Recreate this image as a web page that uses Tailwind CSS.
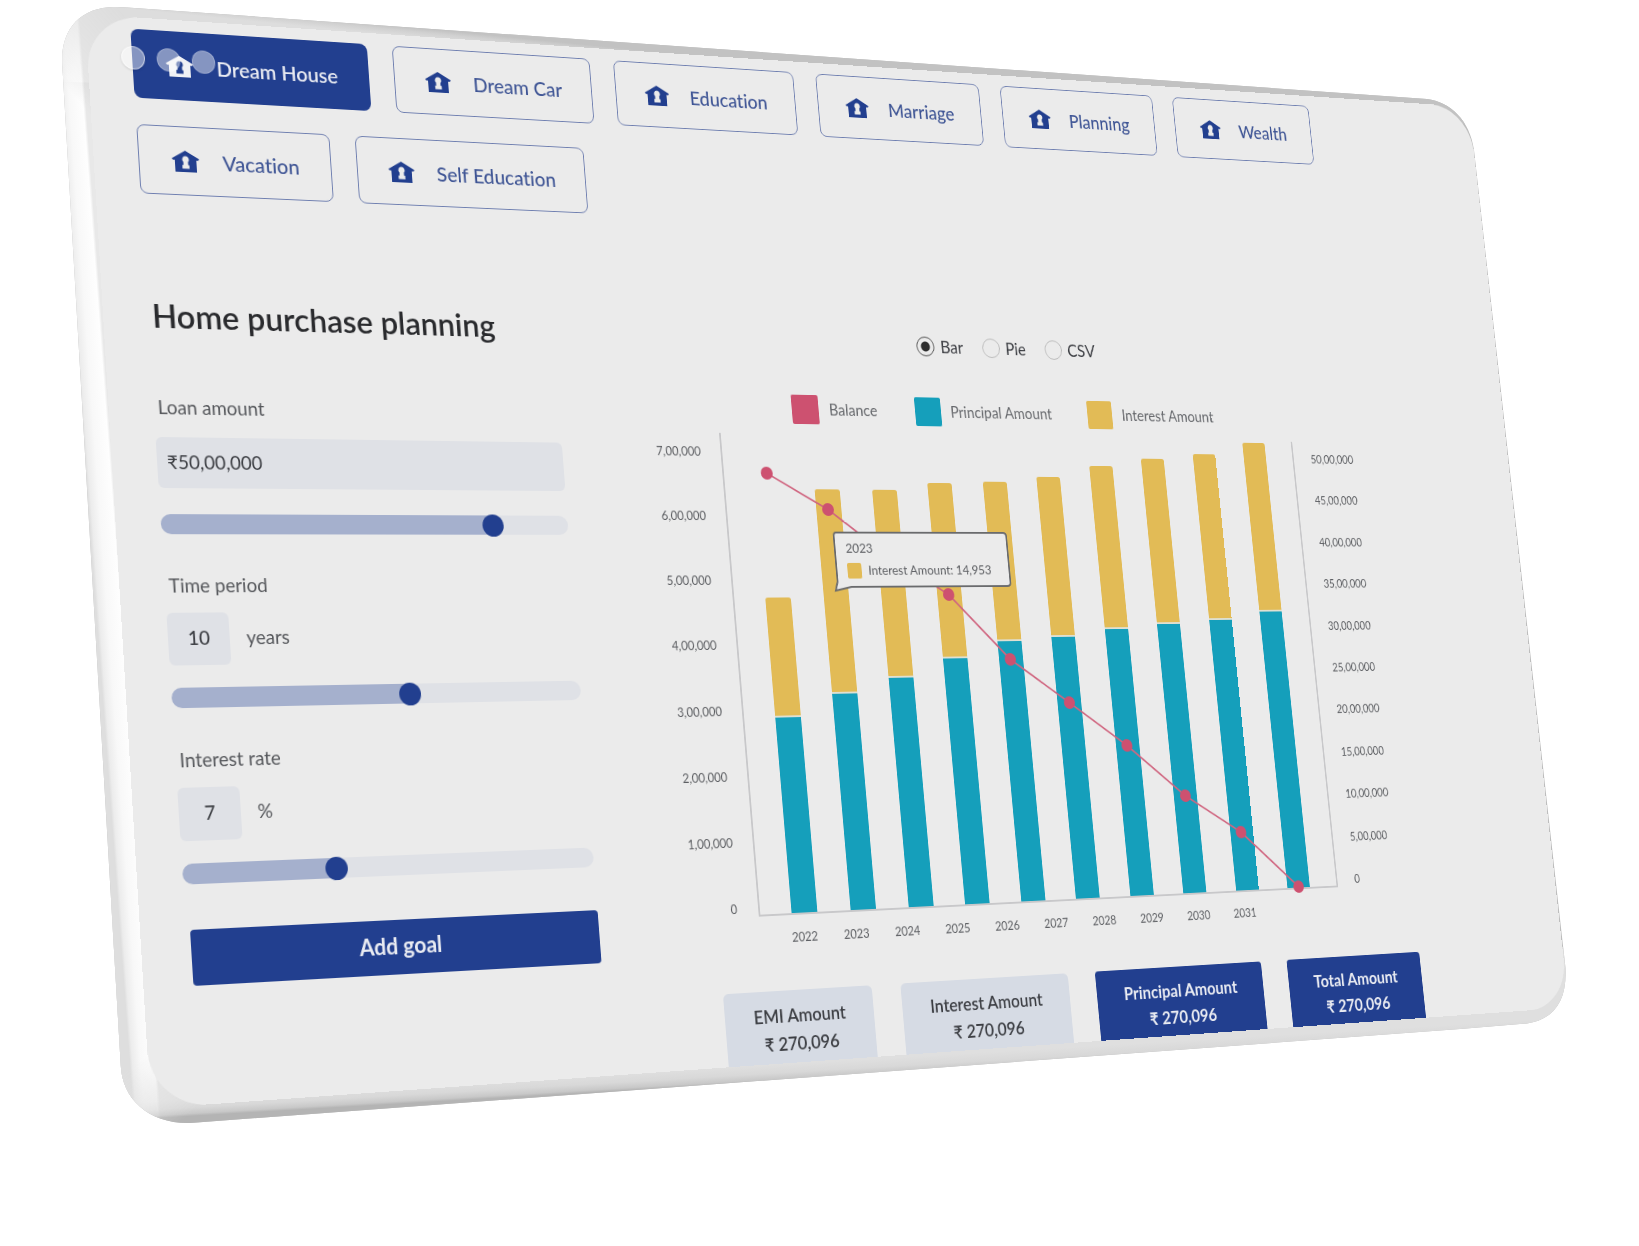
<!DOCTYPE html>
<html lang="en">
<head>
<meta charset="utf-8">
<meta name="viewport" content="width=device-width, initial-scale=1">
<title>Home purchase planning</title>
<script src="https://cdn.jsdelivr.net/npm/@tailwindcss/browser@4"></script>
</head>
<body class="bg-white font-['Lato','Liberation_Sans',sans-serif] [font-variant-ligatures:none]">
<svg width="0" height="0" class="absolute" aria-hidden="true">
  <symbol id="house" viewBox="0 0 28 22">
    <path fill="currentColor" fill-rule="evenodd" d="M14 0 28 8.2 27 9.8H25V22H3V9.8H1L0 8.2ZM14 5.6a3.5 3.5 0 0 0-2.4 6V14.800H10.400V18.600H17.600V14.800H16.400V11.600A3.500 3.500 0 0 0 14 5.600Z"/>
  </symbol>
</svg>
<div class="relative min-h-screen overflow-hidden">

  <!-- body of the tablet: rounded slab with shaded edges -->
  <svg class="absolute top-0 left-0 h-[1246px] w-[1639px]" viewBox="0 0 1639 1246" aria-hidden="true">
    <defs>
      <linearGradient id="edgeTop" gradientUnits="userSpaceOnUse" x1="400" y1="26" x2="399" y2="36">
        <stop offset="0" stop-color="#c2c2c2"/><stop offset=".4" stop-color="#d0d0d0"/><stop offset="1" stop-color="#dddddd"/>
      </linearGradient>
      <linearGradient id="edgeBottom" gradientUnits="userSpaceOnUse" x1="701" y1="1069" x2="702" y2="1086">
        <stop offset="0" stop-color="#dfdfdf"/><stop offset=".5" stop-color="#d8d8d8"/><stop offset=".85" stop-color="#c8c8c8"/><stop offset="1" stop-color="#b4b4b4"/>
      </linearGradient>
      <linearGradient id="edgeLeft" gradientUnits="userSpaceOnUse" x1="88" y1="500" x2="115" y2="498">
        <stop offset="0" stop-color="#dedede"/><stop offset=".1" stop-color="#ececec"/><stop offset=".4" stop-color="#f8f8f8"/><stop offset=".9" stop-color="#fefefe"/><stop offset="1" stop-color="#e8e8e8"/>
      </linearGradient>
      <linearGradient id="fade" gradientUnits="userSpaceOnUse" x1="60" y1="80" x2="130" y2="20">
        <stop offset="0" stop-color="#fff"/><stop offset="1" stop-color="#000"/>
      </linearGradient>
      <linearGradient id="fadeLow" gradientUnits="userSpaceOnUse" x1="140" y1="1060" x2="186" y2="1118">
        <stop offset="0" stop-color="#fff"/><stop offset="1" stop-color="#000"/>
      </linearGradient>
      <mask id="fadeMask" maskUnits="userSpaceOnUse" x="0" y="0" width="260" height="1246"><rect width="260" height="600" fill="url(#fade)"/><rect y="600" width="260" height="646" fill="url(#fadeLow)"/></mask>
      <clipPath id="slab"><path d="M62.3 65C60 30 80 6 117 7L127 7.5 1427 99C1450 102 1470 120 1474 150L1565.5 968C1567 1000 1555 1019 1527 1023.5L1460 1029 190 1123C150 1124 122 1100 120.7 1065Z"/></clipPath>
    </defs>
    <g clip-path="url(#slab)">
      <rect width="1639" height="1246" fill="#bdbdbd"/>
      <path d="M0 0H1500V125L0 80Z" fill="url(#edgeTop)"/>
      <path d="M0 900H1500L1580 960V1246H0Z" fill="url(#edgeBottom)"/>
      <path d="M0 0H160L200 1246H0Z" fill="url(#edgeLeft)" mask="url(#fadeMask)"/>
    </g>
  </svg>

  <!-- screen, seen in perspective -->
  <div class="relative flex w-[calc(100%+41px)] origin-top-left flex-col overflow-hidden rounded-[56px] bg-[#ebebeb] [transform:matrix3d(1.007976,0.06869,0,0.000125464,0.05537,0.973148,0,-0.0000363148,0,0,1,0,85,14,0,1)]">

    <nav class="flex flex-wrap gap-[27px] pt-3 pr-11 pl-[45px] text-[21px] leading-7 font-medium text-[#3f5595]" aria-label="Goals">
      <button class="flex h-[71px] items-center gap-6 rounded-lg bg-[#223f8f] px-[34px] font-semibold text-[#e9ebf2]"><svg class="h-[22px] w-7 text-[#f0f1f5]"><use href="#house"/></svg>Dream House</button>
      <button class="flex h-[71px] items-center gap-6 rounded-lg border border-[#6f7fb0] px-[33px]"><svg class="h-[22px] w-7 text-[#223f8f]"><use href="#house"/></svg>Dream Car</button>
      <button class="flex h-[71px] items-center gap-6 rounded-lg border border-[#6f7fb0] px-[33px]"><svg class="h-[22px] w-7 text-[#223f8f]"><use href="#house"/></svg>Education</button>
      <button class="flex h-[71px] items-center gap-6 rounded-lg border border-[#6f7fb0] px-[33px]"><svg class="h-[22px] w-7 text-[#223f8f]"><use href="#house"/></svg>Marriage</button>
      <button class="flex h-[71px] items-center gap-6 rounded-lg border border-[#6f7fb0] px-[33px]"><svg class="h-[22px] w-7 text-[#223f8f]"><use href="#house"/></svg>Planning</button>
      <button class="flex h-[71px] items-center gap-6 rounded-lg border border-[#6f7fb0] px-[33px]"><svg class="h-[22px] w-7 text-[#223f8f]"><use href="#house"/></svg>Wealth</button>
      <button class="flex h-[71px] items-center gap-6 rounded-lg border border-[#6f7fb0] px-[33px]"><svg class="h-[22px] w-7 text-[#223f8f]"><use href="#house"/></svg>Vacation</button>
      <button class="flex h-[71px] items-center gap-6 rounded-lg border border-[#6f7fb0] px-[33px]"><svg class="h-[22px] w-7 text-[#223f8f]"><use href="#house"/></svg>Self Education</button>
    </nav>

    <!-- window controls floating over the first tab -->
    <div class="absolute top-[30px] left-[34px] flex gap-3" aria-hidden="true">
      <span class="size-6 rounded-full border border-white/60 bg-white/45 shadow-sm"></span>
      <span class="size-6 rounded-full border border-white/20 bg-white/45"></span>
      <span class="size-6 rounded-full border border-white/20 bg-white/45"></span>
    </div>

    <main class="flex">
      <form class="ml-[45px] flex w-[429px] flex-col text-[19px] leading-7 text-[#55575b]">
        <h1 class="mt-[103px] pl-1 text-[33px] leading-10 font-semibold text-[#2a2b2e]">Home purchase planning</h1>

        <label for="loan" class="mt-[59px] pl-1">Loan amount</label>
        <input id="loan" type="text" value="₹50,00,000" class="mt-4 h-[51px] w-full rounded-md bg-[#dfe1e6] pb-[2px] pl-[10px] text-[#3c3e43]">
        <input type="range" aria-label="Loan amount" min="0" max="1000" value="825" style="--fill:81%" class="mt-[26px] h-5 w-full appearance-none rounded-full bg-[linear-gradient(to_right,#a5b0cd_var(--fill),#dfe1e6_var(--fill))] [&::-webkit-slider-thumb]:size-[23px] [&::-webkit-slider-thumb]:appearance-none [&::-webkit-slider-thumb]:rounded-full [&::-webkit-slider-thumb]:bg-[#223f8f]">

        <label for="years" class="mt-[37px] pl-1">Time period</label>
        <div class="mt-[13px] flex items-center gap-[17px]">
          <input id="years" type="text" value="10" class="h-[52px] w-[62px] rounded-md bg-[#dfe1e6] pb-[3px] text-center font-medium text-[#3c3e43]">
          <span class="pb-[2px]">years</span>
        </div>
        <input type="range" aria-label="Time period" min="0" max="1000" value="574" style="--fill:57%" class="mt-[22px] h-5 w-full appearance-none rounded-full bg-[linear-gradient(to_right,#a5b0cd_var(--fill),#dfe1e6_var(--fill))] [&::-webkit-slider-thumb]:size-[23px] [&::-webkit-slider-thumb]:appearance-none [&::-webkit-slider-thumb]:rounded-full [&::-webkit-slider-thumb]:bg-[#223f8f]">

        <label for="rate" class="mt-[37px] pl-1">Interest rate</label>
        <div class="mt-[13px] flex items-center gap-[17px]">
          <input id="rate" type="text" value="7" class="h-[52px] w-[62px] rounded-md bg-[#dfe1e6] pb-[3px] text-center font-medium text-[#3c3e43]">
          <span class="pb-[2px]">%</span>
        </div>
        <input type="range" aria-label="Interest rate" min="0" max="1000" value="355" style="--fill:36%" class="mt-[22px] h-5 w-full appearance-none rounded-full bg-[linear-gradient(to_right,#a5b0cd_var(--fill),#dfe1e6_var(--fill))] [&::-webkit-slider-thumb]:size-[23px] [&::-webkit-slider-thumb]:appearance-none [&::-webkit-slider-thumb]:rounded-full [&::-webkit-slider-thumb]:bg-[#223f8f]">

        <button type="button" class="mt-11 ml-1 h-[54px] rounded-sm bg-[#223f8f] pb-[2px] text-[22px] font-bold text-[#e9ebf2]">Add goal</button>
      </form>

      <section class="mr-[220px] ml-[106px] flex flex-1 flex-col">
        <fieldset class="mt-[121px] flex justify-center gap-6 pr-[14px] text-[19px] leading-6 text-[#3c3e43]">
          <label class="flex items-center gap-[7px]"><input type="radio" name="view" checked class="size-[22px] appearance-none rounded-full border border-[#b8b8b8] checked:border-[#444] checked:bg-[radial-gradient(circle,#2d2d2d_5px,transparent_6px)]">Bar</label>
          <label class="flex items-center gap-[7px]"><input type="radio" name="view" class="size-[22px] appearance-none rounded-full border border-[#b8b8b8] checked:border-[#444]">Pie</label>
          <label class="flex items-center gap-[7px]"><input type="radio" name="view" class="size-[22px] appearance-none rounded-full border border-[#b8b8b8] checked:border-[#444]">CSV</label>
        </fieldset>

        <ul class="mt-[45px] flex justify-center gap-[46px] pr-6 text-[17px] leading-8 text-[#66686c]">
          <li class="flex gap-3"><span class="size-8 rounded-xs bg-[#cd5170]"></span>Balance</li>
          <li class="flex gap-3"><span class="size-8 rounded-xs bg-[#159fbb]"></span>Principal Amount</li>
          <li class="flex gap-3"><span class="size-8 rounded-xs bg-[#e2bb56]"></span>Interest Amount</li>
        </ul>

        <div class="mt-[11px] flex text-[13px] leading-[18px] text-[#5c5e62]">
          <div class="mr-[25px] flex w-[50px] flex-col justify-between pt-[11px] pb-px text-right">
            <span>7,00,000</span><span>6,00,000</span><span>5,00,000</span><span>4,00,000</span><span>3,00,000</span><span>2,00,000</span><span>1,00,000</span><span>0</span>
          </div>
          <div class="relative h-[514px] flex-1">
            <svg class="h-[512px] w-full overflow-visible" viewBox="0 0 721 512" preserveAspectRatio="none" role="img" aria-label="Yearly principal, interest and balance">
              <path d="M0 0V512H721V0" fill="none" stroke="#c8c8ca" stroke-width="2"/>
              <g fill="#e2bb56">
                <rect x="37" y="177" width="30" height="130" rx="3"/><rect x="106" y="60" width="30" height="223" rx="3"/><rect x="175" y="60" width="30" height="207" rx="3"/><rect x="243" y="52" width="30" height="195" rx="3"/><rect x="312" y="50" width="30" height="179" rx="3"/><rect x="380" y="44" width="30" height="181" rx="3"/><rect x="449" y="31" width="30" height="186" rx="3"/><rect x="517" y="22" width="30" height="190" rx="3"/><rect x="586" y="16" width="30" height="192" rx="3"/><rect x="654" y="2" width="30" height="197" rx="3"/>
              </g>
              <path fill="#159fbb" d="M37 304h30v207H37zM106 280h30v231h-30zM175 264h30v247h-30zM243 244h30v267h-30zM312 226h30v285h-30zM380 222h30v289h-30zM449 214h30v297h-30zM517 209h30v302h-30zM586 205h30v306h-30zM654 196h30v315h-30z"/>
              <path d="M37 304h30M106 280h30M175 264h30M243 244h30M312 226h30M380 222h30M449 214h30M517 209h30M586 205h30M654 196h30" stroke="#dfe0d2" stroke-width="2"/>
              <path d="M51 43 120 82 188 133 257 175 326 247 395 296 463 345 532 403 600 446 669 510" fill="none" stroke="#d06680" stroke-width="2"/>
              <g fill="#cd5170">
                <circle cx="51" cy="43" r="7"/><circle cx="120" cy="82" r="7"/><circle cx="188" cy="133" r="7"/><circle cx="257" cy="175" r="7"/><circle cx="326" cy="247" r="7"/><circle cx="395" cy="296" r="7"/><circle cx="463" cy="345" r="7"/><circle cx="532" cy="403" r="7"/><circle cx="600" cy="446" r="7"/><circle cx="669" cy="510" r="7"/>
              </g>
            </svg>
            <div class="absolute top-[106px] left-[122px] h-[62px] w-[214px] pt-2 pl-[15px] text-sm leading-5" role="tooltip">
              <svg class="absolute inset-0 h-16 w-[214px] overflow-visible" viewBox="0 0 214 64" aria-hidden="true"><path d="M5 1H209Q213 1 213 5V56Q213 60 209 60H18L-1 64 2 54V5Q2 1 5 1Z" fill="#ebebeb" stroke="#6a6b6d" stroke-width="2"/></svg>
              <div class="relative">2023</div>
              <div class="relative mt-1 flex items-center gap-2"><span class="size-[17px] rounded-xs bg-[#e2bb56]"></span>Interest Amount: 14,953</div>
            </div>
          </div>
          <div class="ml-6 flex w-[60px] flex-col justify-between pt-[11px] pb-px">
            <span>50,00,000</span><span>45,00,000</span><span>40,00,000</span><span>35,00,000</span><span>30,00,000</span><span>25,00,000</span><span>20,00,000</span><span>15,00,000</span><span>10,00,000</span><span>5,00,000</span><span>0</span>
          </div>
        </div>

        <div class="mt-[13px] mr-[180px] ml-[95px] grid grid-cols-10 text-center text-[13px] leading-[18px] text-[#5c5e62]">
          <span>2022</span><span>2023</span><span>2024</span><span>2025</span><span>2026</span><span>2027</span><span>2028</span><span>2029</span><span>2030</span><span>2031</span>
        </div>

        <div class="mt-[46px] -mr-[18px] ml-[26px] flex gap-[34px] text-center text-[19px] leading-[29px] font-semibold whitespace-nowrap text-[#3c3e43]">
          <div class="flex-[172] rounded-t-md bg-[#d6dbe4] pt-[11px] pb-[6px]"><p>EMI Amount</p><p>₹ 270,096</p></div>
          <div class="flex-[204] rounded-t-md bg-[#d6dbe4] pt-[11px] pb-[6px]"><p>Interest Amount</p><p>₹ 270,096</p></div>
          <div class="flex-[215] rounded-t-sm bg-[#223f8f] pt-[11px] pb-[6px] font-bold text-[#e9ebf2]"><p>Principal Amount</p><p>₹ 270,096</p></div>
          <div class="flex-[180] rounded-t-sm bg-[#223f8f] pt-[11px] pb-[6px] font-bold text-[#e9ebf2]"><p>Total Amount</p><p>₹ 270,096</p></div>
        </div>
      </section>
    </main>
  </div>
</div>
</body>
</html>
